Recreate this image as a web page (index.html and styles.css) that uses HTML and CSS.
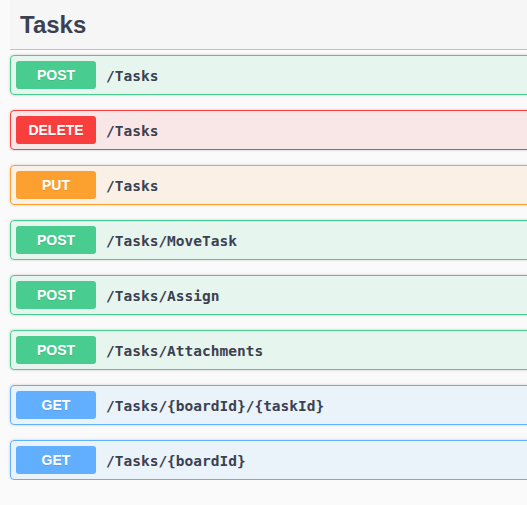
FILE: index.html
```html
<!DOCTYPE html>
<html>
<head>
<meta charset="utf-8">
<link rel="stylesheet" href="styles.css">
</head>
<body>
<div class="wrap">
  <section class="tag-section">
    <h3 class="tag">Tasks</h3>
    <div class="ops">
      <div class="op op-post"><span class="method">POST</span><span class="path">/Tasks</span></div>
      <div class="op op-delete"><span class="method">DELETE</span><span class="path">/Tasks</span></div>
      <div class="op op-put"><span class="method">PUT</span><span class="path">/Tasks</span></div>
      <div class="op op-post"><span class="method">POST</span><span class="path">/Tasks/MoveTask</span></div>
      <div class="op op-post"><span class="method">POST</span><span class="path">/Tasks/Assign</span></div>
      <div class="op op-post"><span class="method">POST</span><span class="path">/Tasks/Attachments</span></div>
      <div class="op op-get"><span class="method">GET</span><span class="path">/Tasks/{boardId}/{taskId}</span></div>
      <div class="op op-get"><span class="method">GET</span><span class="path">/Tasks/{boardId}</span></div>
    </div>
  </section>
</div>
</body>
</html>
```
FILE: styles.css
```css
html, body {
  margin: 0;
  padding: 0;
  background: #fafafa;
}
.wrap {
  padding-left: 10px;
  overflow: hidden;
}
.tag-section {
  display: flex;
  flex-direction: column;
  margin-right: -20px;
}
.tag {
  margin: 0 0 5px 0;
  padding: 10px 20px 10px 10px;
  background: #f6f6f6;
  border-bottom: 1px solid rgba(59, 65, 81, 0.3);
  font-family: "Liberation Sans", Arial, sans-serif;
  font-weight: 700;
  font-size: 24px;
  line-height: 29px;
  color: #3b4151;
}
.ops {
  display: flex;
  flex-direction: column;
  gap: 15px;
}
.op {
  display: flex;
  align-items: center;
  padding: 5px;
  border: 1px solid #000;
  border-radius: 4px;
  box-shadow: 0 0 3px rgba(0, 0, 0, 0.19);
}
.method {
  min-width: 80px;
  padding: 6px 0;
  border-radius: 3px;
  text-align: center;
  font-family: "Liberation Sans", Arial, sans-serif;
  font-weight: 700;
  font-size: 14px;
  line-height: 16px;
  color: #fff;
  text-shadow: 0 1px 0 rgba(0, 0, 0, 0.1);
}
.path {
  padding: 1px 10px 0;
  font-family: "DejaVu Sans Mono", monospace;
  font-weight: 700;
  font-size: 14.5px;
  color: #3b4151;
}
.op-post { border-color: #49cc90; background: rgba(73, 204, 144, 0.1); }
.op-post .method { background: #49cc90; }
.op-delete { border-color: #f93e3e; background: rgba(249, 62, 62, 0.1); }
.op-delete .method { background: #f93e3e; }
.op-put { border-color: #fca130; background: rgba(252, 161, 48, 0.1); }
.op-put .method { background: #fca130; }
.op-get { border-color: #61affe; background: rgba(97, 175, 254, 0.1); }
.op-get .method { background: #61affe; }
```
